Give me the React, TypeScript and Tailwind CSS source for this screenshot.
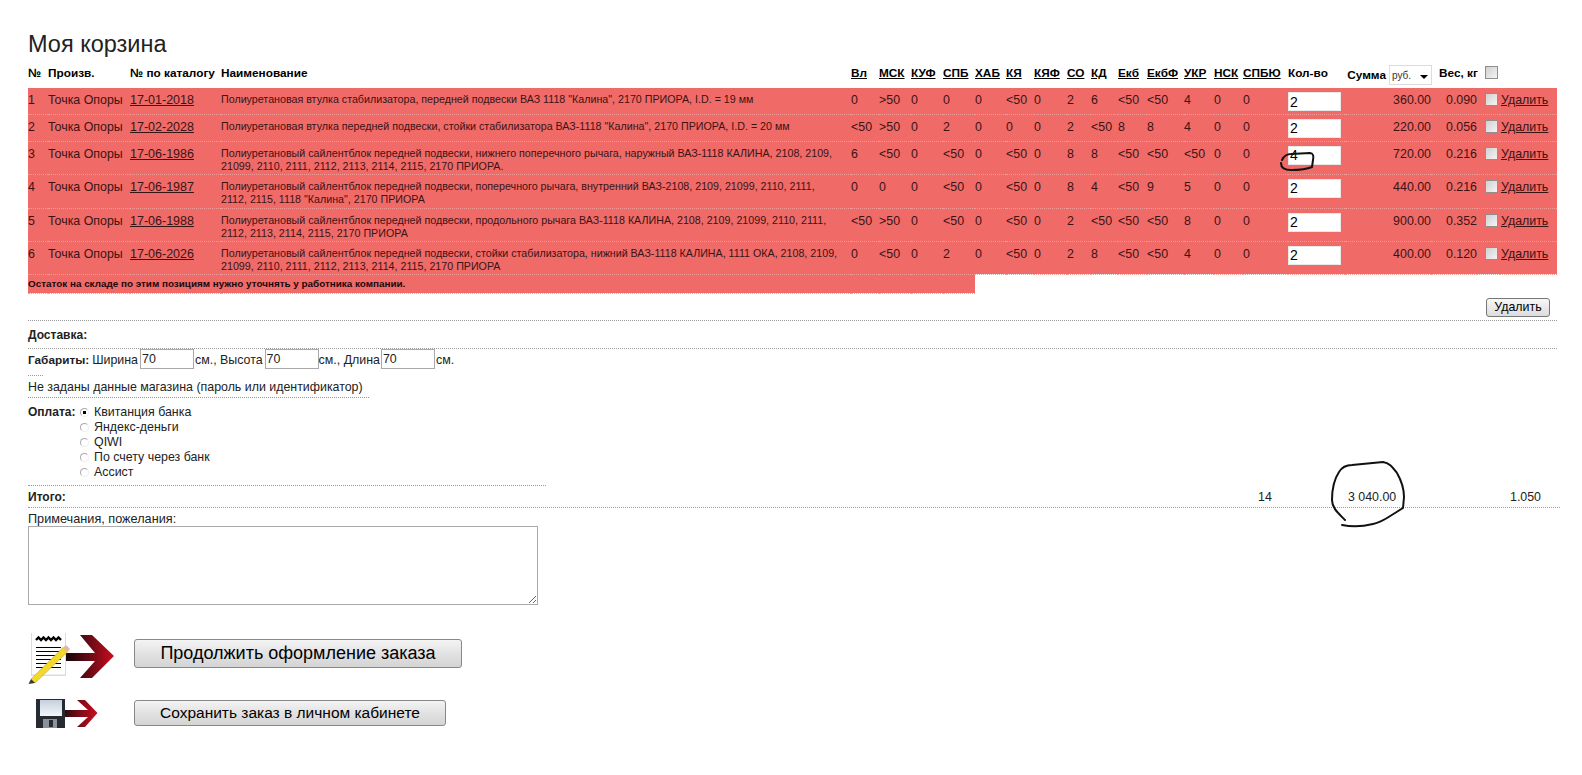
const arial = { fontFamily: '"Liberation Sans", Arial, sans-serif' }

const storeHeaders = ["Вл", "МСК", "КУФ", "СПБ", "ХАБ", "КЯ", "КЯФ", "СО", "КД", "Екб", "ЕкбФ", "УКР", "НСК", "СПБЮ"]

const widths = [20, 82, 91, 630, 28, 32, 32, 32, 31, 28, 33, 24, 27, 29, 37, 30, 29, 45, 57, 86, 46, 23, 57]

const rows = [
  {
    id: 1,
    code: "17-01-2018",
    name: 'Полиуретановая втулка стабилизатора, передней подвески ВАЗ 1118 "Калина", 2170 ПРИОРА, I.D. = 19 мм',
    stock: ["0", ">50", "0", "0", "0", "<50", "0", "2", "6", "<50", "<50", "4", "0", "0"],
    qty: "2",
    sum: "360.00",
    weight: "0.090",
    height: "h-[26px]",
  },
  {
    id: 2,
    code: "17-02-2028",
    name: 'Полиуретановая втулка передней подвески, стойки стабилизатора ВАЗ-1118 "Калина", 2170 ПРИОРА, I.D. = 20 мм',
    stock: ["<50", ">50", "0", "2", "0", "0", "0", "2", "<50", "8", "8", "4", "0", "0"],
    qty: "2",
    sum: "220.00",
    weight: "0.056",
    height: "h-[27px]",
  },
  {
    id: 3,
    code: "17-06-1986",
    name: "Полиуретановый сайлентблок передней подвески, нижнего поперечного рычага, наружный ВАЗ-1118 КАЛИНА, 2108, 2109, 21099, 2110, 2111, 2112, 2113, 2114, 2115, 2170 ПРИОРА.",
    stock: ["6", "<50", "0", "<50", "0", "<50", "0", "8", "8", "<50", "<50", "<50", "0", "0"],
    qty: "4",
    sum: "720.00",
    weight: "0.216",
    height: "h-[33px]",
  },
  {
    id: 4,
    code: "17-06-1987",
    name: 'Полиуретановый сайлентблок передней подвески, поперечного рычага, внутренний ВАЗ-2108, 2109, 21099, 2110, 2111, 2112, 2115, 1118 "Калина", 2170 ПРИОРА',
    stock: ["0", "0", "0", "<50", "0", "<50", "0", "8", "4", "<50", "9", "5", "0", "0"],
    qty: "2",
    sum: "440.00",
    weight: "0.216",
    height: "h-[34px]",
  },
  {
    id: 5,
    code: "17-06-1988",
    name: "Полиуретановый сайлентблок передней подвески, продольного рычага ВАЗ-1118 КАЛИНА, 2108, 2109, 21099, 2110, 2111, 2112, 2113, 2114, 2115, 2170 ПРИОРА",
    stock: ["<50", ">50", "0", "<50", "0", "<50", "0", "2", "<50", "<50", "<50", "8", "0", "0"],
    qty: "2",
    sum: "900.00",
    weight: "0.352",
    height: "h-[33px]",
  },
  {
    id: 6,
    code: "17-06-2026",
    name: "Полиуретановый сайлентблок передней подвески, стойки стабилизатора, нижний ВАЗ-1118 КАЛИНА, 1111 ОКА, 2108, 2109, 21099, 2110, 2111, 2112, 2113, 2114, 2115, 2170 ПРИОРА",
    stock: ["0", "<50", "0", "2", "0", "<50", "0", "2", "8", "<50", "<50", "4", "0", "0"],
    qty: "2",
    sum: "400.00",
    weight: "0.120",
    height: "h-[33px]",
  },
]

const payments = ["Квитанция банка", "Яндекс-деньги", "QIWI", "По счету через банк", "Ассист"]

function Check() {
  return (
    <input
      type="checkbox"
      className="appearance-none block w-[13px] h-[13px] border border-[#8f8f8f] bg-gradient-to-br from-[#d0d0d0] to-[#f4f4f4]"
    />
  )
}

function DocIcon() {
  return (
    <svg width="88" height="53" viewBox="0 0 88 53" className="block shrink-0">
      <defs>
        <linearGradient id="arrowA" x1="0" x2="1" y1="0" y2="0">
          <stop offset="0" stopColor="#120406" />
          <stop offset="0.45" stopColor="#5e0a14" />
          <stop offset="1" stopColor="#cc0c20" />
        </linearGradient>
      </defs>
      <path d="M37 21H67L52 3H64L86 24L64 46H52L67 29H37Z" fill="url(#arrowA)" />
      <rect x="3" y="1" width="35" height="43" fill="#dcdcdc" />
      <rect x="4" y="0.5" width="33" height="42" fill="#fff" />
      <path d="M8 8L10.5 5.5L13 8L15.5 5.5L18 8L20.5 5.5L23 8L25.5 5.5L28 8L30.5 5.5L33 8" fill="none" stroke="#000" strokeWidth="2.4" />
      <path d="M8 15.5H33M8 19.5H33M8 23.5H33M8 27.5H33M8 31.5H33M8 35.5H33" stroke="#000" strokeWidth="1.1" />
      <path d="M3 47L35 15.5L39.5 20L7 51Z" fill="#f2d92c" stroke="#b79c1a" strokeWidth="0.5" />
      <path d="M35 15.5L38 13L42 17L39.5 20Z" fill="#e3b7a4" />
      <path d="M3 47L7 51L0.5 52Z" fill="#3a3a2a" />
    </svg>
  )
}

function SaveIcon() {
  return (
    <svg width="62" height="29" viewBox="0 0 62 29" className="block shrink-0">
      <defs>
        <linearGradient id="arrowB" x1="0" x2="1" y1="0" y2="0">
          <stop offset="0" stopColor="#2a0a0e" />
          <stop offset="0.5" stopColor="#7e0c18" />
          <stop offset="1" stopColor="#cc0c20" />
        </linearGradient>
        <linearGradient id="disk" x1="0" x2="0" y1="0" y2="1">
          <stop offset="0" stopColor="#c4d0de" />
          <stop offset="1" stopColor="#f4f6f9" />
        </linearGradient>
      </defs>
      <path d="M28 11H52L41 1H49L61.5 14L49 28H41L52 18H28Z" fill="url(#arrowB)" />
      <rect x="0" y="0" width="29" height="29" fill="#262b31" />
      <rect x="4" y="1" width="22" height="16" fill="url(#disk)" />
      <rect x="7" y="20" width="14" height="9" fill="#8c9299" />
      <rect x="13" y="21" width="4" height="7" fill="#262b31" />
    </svg>
  )
}

function App() {
  return (
    <div className="relative w-[1582px] h-[775px] overflow-hidden bg-white pl-[28px] text-[12.4px] leading-[14px] text-[#222]" style={arial}>

      <h1 className="pt-[30px] h-[65px] text-[23.5px] leading-[28px] font-normal text-[#222]">
        Моя корзина
      </h1>

      {/* Cart table */}
      <table className="table-fixed w-[1529px]">
        <colgroup>
          {widths.map((w, i) => (
            <col key={i} style={{ width: w }} />
          ))}
        </colgroup>

        <thead>
          <tr className="h-[23px] align-top text-left font-bold text-black text-[11.8px]">
            <th className="pt-[1px]">№</th>
            <th className="pt-[1px]">Произв.</th>
            <th className="pt-[1px]">№ по каталогу</th>
            <th className="pt-[1px]">Наименование</th>
            {storeHeaders.map((h) => (
              <th key={h} className="pt-[1px] whitespace-nowrap underline">
                {h}
              </th>
            ))}
            <th className="pt-[1px] whitespace-nowrap">Кол-во</th>
            <th className="pt-0">
              <div className="flex items-start justify-end gap-[3px] -mr-[1px]">
                <span className="pt-[3px]">Сумма</span>
                <span className="relative block shrink-0 w-[43px] h-[20px] border border-[#dcdcdc] bg-white font-normal text-[10px] leading-[20px] pl-[2px] text-[#333]">
                  руб.
                  <span className="absolute right-[3px] top-[9px] border-x-[4px] border-t-[4px] border-x-transparent border-t-black" />
                </span>
              </div>
            </th>
            <th colSpan={2} className="pt-[1px] pl-[8px]">
              <div className="flex items-start gap-[7px] whitespace-nowrap">
                <span>Вес, кг</span>
                <Check />
              </div>
            </th>
            <th />
          </tr>
        </thead>

        <tbody className="text-[#3a1414] text-[12.4px]">
          {rows.map((row) => (
            <tr key={row.id} className={`${row.height} align-top bg-[#f06a68] border-b border-dotted border-[#f39a97]`}>
              <td className="pt-[5px]">{row.id}</td>
              <td className="pt-[5px] whitespace-nowrap">Точка Опоры</td>
              <td className="pt-[5px]">
                <a className="underline text-[12.5px]">{row.code}</a>
              </td>
              <td className="pt-[5px] pr-[11px] text-[10.7px] leading-[13px]">{row.name}</td>
              {row.stock.map((s, i) => (
                <td key={i} className="pt-[5px] whitespace-nowrap">
                  {s}
                </td>
              ))}
              <td className="pt-[4px]">
                <input
                  readOnly
                  value={row.qty}
                  className="block w-[53px] h-[19px] bg-white px-[1px] text-[14px] text-black border border-[#e8e8e8] outline-none"
                />
              </td>
              <td className="pt-[5px] text-right">{row.sum}</td>
              <td className="pt-[5px] text-right">{row.weight}</td>
              <td className="pt-[5px] pl-[8px]">
                <Check />
              </td>
              <td className="pt-[5px] pl-[1px]">
                <a className="underline">Удалить</a>
              </td>
            </tr>
          ))}

          <tr className="h-[19px] align-middle">
            <td colSpan={8} className="bg-[#f06a68] border-b border-dotted border-[#f39a97] text-[9.9px] font-bold text-[#1c0808]">
              Остаток на складе по этим позициям нужно уточнять у работника компании.
            </td>
            <td colSpan={15} />
          </tr>
        </tbody>
      </table>

      <div className="flex justify-end w-[1522px] mt-[4px]">
        <button className="w-[64px] h-[19px] rounded-[3px] border border-[#777] bg-gradient-to-b from-[#f8f8f8] to-[#dcdcdc] text-[12.4px] leading-none text-black">
          Удалить
        </button>
      </div>

      {/* Delivery */}
      <div className="w-[1529px] mt-[3px] h-[28px] border-t border-dotted border-[#999] pt-[7px] font-bold text-[12px]">
        Доставка:
      </div>

      <div className="w-[1529px] h-[27px] border-t border-dotted border-[#999] flex items-start">
        <b className="pt-[4px] text-[11.8px]">Габариты:</b>
        <span className="pt-[4px] pl-[3px] pr-[2px]">Ширина</span>
        <input readOnly value="70" className="w-[54px] h-[20px] border border-[#aaa] px-[1px] text-[12.4px]" />
        <span className="pt-[4px] pl-[1px] pr-[2px]">см., Высота</span>
        <input readOnly value="70" className="w-[54px] h-[20px] border border-[#aaa] px-[1px] text-[12.4px]" />
        <span className="pt-[4px] pr-[1px]">см., Длина</span>
        <input readOnly value="70" className="w-[54px] h-[20px] border border-[#aaa] px-[1px] text-[12.4px]" />
        <span className="pt-[4px] pl-[1px]">см.</span>
      </div>

      <div className="w-[15px] border-t border-dotted border-[#999]" />

      <div className="w-[341px] h-[22px] border-b border-dotted border-[#999] pt-[4px]">
        Не заданы данные магазина (пароль или идентификатор)
      </div>

      {/* Payment */}
      <div className="w-[518px] h-[88px] border-b border-dotted border-[#999] flex items-start pt-[7px]">
        <b className="w-[52px] text-[12px]">Оплата:</b>
        <div className="flex flex-col">
          {payments.map((p, i) => (
            <label key={p} className="h-[15px] flex items-center gap-[5px]">
              <input
                type="radio"
                name="pay"
                readOnly
                checked={i === 0}
                className={`appearance-none block w-[9px] h-[9px] rounded-full border border-[#aaa] border-r-[#eee] border-b-[#eee] bg-white ${i === 0 ? "bg-[radial-gradient(circle,#000_30%,#fff_38%)]" : ""}`}
              />
              <span>{p}</span>
            </label>
          ))}
        </div>
      </div>

      {/* Total */}
      <div className="relative w-[1532px] h-[22px] border-b border-dotted border-[#999] flex items-start pt-[4px]">
        <b className="w-[1230px] text-[12px]">Итого:</b>
        <span className="w-[90px]">14</span>
        <span className="w-[162px]">3 040.00</span>
        <span>1.050</span>
      </div>

      <div className="pt-[4px] h-[18px] text-[12.7px]">Примечания, пожелания:</div>
      <textarea readOnly className="block w-[510px] h-[79px] border border-[#aaa] resize-y bg-white" />

      {/* Actions */}
      <div className="flex items-start mt-[27px]">
        <DocIcon />
        <button className="ml-[18px] mt-[7px] w-[328px] h-[29px] rounded-[3px] border border-[#888] bg-gradient-to-b from-[#f4f4f4] via-[#e2e2e2] to-[#d4d4d4] text-[18px] leading-none text-black">
          Продолжить оформление заказа
        </button>
      </div>

      <div className="flex items-start mt-[14px] pl-[8px]">
        <SaveIcon />
        <button className="ml-[36px] mt-[1px] w-[312px] h-[26px] rounded-[3px] border border-[#888] bg-gradient-to-b from-[#f4f4f4] via-[#e2e2e2] to-[#d4d4d4] text-[15.5px] leading-none text-black">
          Сохранить заказ в личном кабинете
        </button>
      </div>

      {/* Hand-drawn marks on top of the page */}
      <svg width="1582" height="775" className="absolute left-0 top-0 pointer-events-none" fill="none" stroke="#111" strokeLinecap="round" strokeLinejoin="round">
        <path strokeWidth="2" d="M1282 160C1284 156 1287 154 1291 154L1310 153C1313 153 1314 156 1313 160L1312 167C1305 170 1298 170 1291 170C1285 170 1281 168 1281 163" />
        <path strokeWidth="2" d="M1345 520C1338 513 1332 508 1332 500C1332 488 1335 478 1339 472C1342 467 1347 465 1352 465L1383 462C1390 463 1393 468 1397 473C1401 480 1404 488 1404 497L1403 508L1395 513L1387 518C1382 521 1378 523 1373 524C1365 526 1352 527 1342 525" />
      </svg>

    </div>
  )
}

export default App
